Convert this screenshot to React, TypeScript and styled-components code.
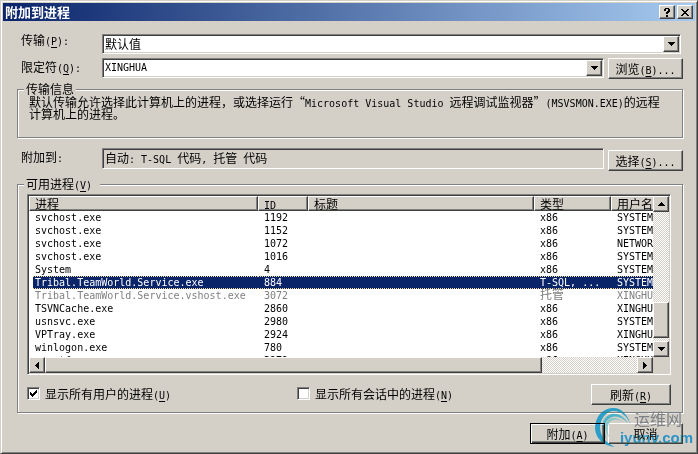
import React, { useState } from "react";
import styled, { createGlobalStyle, css } from "styled-components";

const face = "#d4d0c8";
const navy = "#0a246a";
const shadow = "#808080";
const dark = "#404040";

const GlobalStyle = createGlobalStyle`
  *, *::before, *::after { box-sizing: border-box; }
  body {
    margin: 0;
    background: ${face};
    color: #000;
    font-family: "Noto Sans CJK SC", sans-serif;
    font-size: 12px;
    line-height: 12px;
    text-spacing-trim: space-all;
  }
  button, input, select { font: inherit; color: inherit; border-radius: 0; margin: 0; }
`;

const raised = css`
  background: ${face};
  border: 1px solid;
  border-color: #fff ${dark} ${dark} #fff;
  box-shadow: inset -1px -1px 0 ${shadow};
`;

const sunken = css`
  border: 1px solid;
  border-color: ${shadow} #fff #fff ${shadow};
  box-shadow: inset 1px 1px 0 ${dark}, inset -1px -1px 0 ${face};
`;

const Latin = styled.span`
  font-family: "DejaVu Sans Mono", monospace;
  font-size: 10px;
  line-height: 0;
  white-space: pre-wrap;
`;

const Key = styled.u`
  text-underline-offset: 2px;
`;

function Mixed({ children }: { children: string }) {
  return (
    <>
      {children.split(/([\x20-\x7e]+)/).map((part, i) => (i % 2 ? <Latin key={i}>{part}</Latin> : part))}
    </>
  );
}

function Caption({ text, hot, tail = "" }: { text: string; hot: string; tail?: string }) {
  return (
    <>
      {text}
      <Latin>
        (<Key>{hot}</Key>){tail}
      </Latin>
    </>
  );
}

const Dialog = styled.main`
  position: relative;
  padding: 2px;
  background: ${face};
  border: 1px solid;
  border-color: ${face} ${dark} ${dark} ${face};
  box-shadow: inset 1px 1px 0 #fff, inset -1px -1px 0 ${shadow};
`;

const TitleBar = styled.header`
  display: flex;
  align-items: center;
  gap: 2px;
  height: 18px;
  padding: 0 2px;
  background: linear-gradient(90deg, ${navy}, #a6caf0);
`;

const Title = styled.h1`
  flex: 1;
  margin: 0;
  color: #fff;
  font-size: 13px;
  line-height: 16px;
  font-weight: 700;
`;

const CaptionButton = styled.button`
  ${raised}
  display: grid;
  place-items: center;
  width: 16px;
  height: 14px;
  padding: 0;
`;

const Body = styled.form`
  padding: 13px 12px 7px 14px;
`;

const FormRow = styled.div<{ $top?: number; $end?: number; $min?: number }>`
  display: flex;
  align-items: flex-start;
  gap: 4px;
  min-height: ${(p) => p.$min ?? 20}px;
  margin-top: ${(p) => p.$top ?? 0}px;
  padding-left: 4px;
  padding-right: ${(p) => p.$end ?? 0}px;
`;

const FieldLabel = styled.label<{ $pad?: number }>`
  flex: 0 0 77px;
  padding-top: ${(p) => p.$pad ?? 0}px;
`;

const Combo = styled.div`
  ${sunken}
  flex: 1;
  min-width: 0;
  display: grid;
  grid-template-columns: minmax(0, 1fr) 16px;
  height: 20px;
  padding: 1px;
  background: #fff;
`;

const Select = styled.select`
  grid-area: 1 / 1 / 2 / 3;
  appearance: none;
  border: 0;
  outline: 0;
  background: transparent;
  padding: 0 18px 0 1px;
  line-height: 16px;
`;

const TextInput = styled.input`
  min-width: 0;
  border: 0;
  outline: 0;
  background: transparent;
  padding: 0 1px;
  font-family: "DejaVu Sans Mono", monospace;
  font-size: 10px;
`;

const ArrowFace = styled.span`
  ${raised}
  grid-area: 1 / 2;
  display: grid;
  place-items: center;
  pointer-events: none;
`;

const ArrowButton = styled.button`
  ${raised}
  display: grid;
  place-items: center;
  width: 16px;
  height: 16px;
  padding: 0;
  flex: none;
`;

const PushButton = styled.button<{ $wide?: boolean; $default?: boolean; $low?: boolean }>`
  ${raised}
  flex: none;
  width: ${(p) => (p.$wide ? 80 : 75)}px;
  height: 21px;
  padding: 0;
  white-space: nowrap;
  align-self: ${(p) => (p.$low ? "flex-end" : "auto")};
  ${(p) =>
    p.$default &&
    css`
      border-color: #000;
      box-shadow: inset 1px 1px 0 #fff, inset -1px -1px 0 ${dark}, inset -2px -2px 0 ${shadow};
    `}
`;

const Group = styled.fieldset<{ $top: number }>`
  min-width: 0;
  margin: ${(p) => p.$top}px 0 0;
  padding: 0;
  border: 1px solid ${shadow};
  box-shadow: inset 1px 1px 0 #fff, 1px 1px 0 #fff;
`;

const Legend = styled.legend<{ $end?: number }>`
  margin-left: 6px;
  padding: 0 ${(p) => p.$end ?? 2}px 0 2px;
  background: ${face};
`;

const Description = styled.p`
  min-height: 42px;
  margin: 0;
  padding: 1px 16px 0 11px;
`;

const ReadOnly = styled.output`
  flex: 1;
  min-width: 0;
  height: 21px;
  padding: 3px 2px;
  border: 1px solid;
  border-color: ${shadow} #fff #fff ${shadow};
  box-shadow: inset 1px 1px 0 ${dark};
`;

const GroupBody = styled.div`
  padding: 4px 11px 7px 9px;
`;

const ListFrame = styled.div`
  ${sunken}
  display: grid;
  grid-template-columns: minmax(0, 1fr) 16px;
  grid-template-rows: 161px 16px;
  padding: 1px;
  background: #fff;
`;

const Viewport = styled.div`
  overflow: hidden;
`;

const Table = styled.table`
  width: 100%;
  table-layout: fixed;
  border-collapse: separate;
  border-spacing: 0;
`;

const Col = styled.col<{ $width?: number }>`
  width: ${(p) => (p.$width ? `${p.$width}px` : "auto")};
`;

const HeadCell = styled.th`
  ${raised}
  height: 15px;
  padding: 0 0 0 5px;
  font-weight: 400;
  line-height: 13px;
  text-align: left;
  white-space: nowrap;
  overflow: hidden;

  &:last-child { border-right: 0; box-shadow: inset 0 -1px 0 ${shadow}; }
`;

const dots = "repeating-linear-gradient(90deg, #f5db95 0 1px, #0a246a 1px 2px)";

const CellText = styled.span`
  display: block;
  height: 13px;
  line-height: 10px;
  padding-left: 6px;
  white-space: nowrap;
`;

const Row = styled.tr<{ $state?: "selected" | "disabled" }>`
  color: ${(p) => (p.$state === "selected" ? "#fff" : p.$state === "disabled" ? shadow : "#000")};

  td { padding: 0; }
  td:first-child { padding-left: 4px; }
  td:first-child ${CellText} { padding-left: 2px; }

  ${CellText} {
    ${(p) =>
      p.$state === "selected" &&
      css`
        background: ${dots} top / 100% 1px no-repeat, ${dots} bottom / 100% 1px no-repeat, ${navy};
      `}
  }
`;

const Track = styled.div<{ $vertical?: boolean }>`
  display: flex;
  flex-direction: ${(p) => (p.$vertical ? "column" : "row")};
  background: repeating-conic-gradient(#fff 0 25%, ${face} 0 50%) 0 0 / 2px 2px;
`;

const Lane = styled.div`
  flex: 1;
  display: flex;
`;

const VerticalLane = styled(Lane)`
  flex-direction: column;
  justify-content: flex-end;
  padding-bottom: 3px;
`;

const Thumb = styled.div<{ $vertical?: boolean }>`
  ${raised}
  ${(p) => (p.$vertical ? "height: 36px;" : "width: 84%;")}
`;

const Corner = styled.div`
  background: ${face};
`;

const Options = styled.div`
  display: grid;
  grid-template-columns: minmax(0, 270px) minmax(0, 1fr) auto;
  align-items: start;
  margin-top: 9px;
`;

const CheckLabel = styled.label`
  display: flex;
  align-items: center;
  gap: 5px;
  padding-top: 3px;
  white-space: nowrap;
`;

const CheckBox = styled.span`
  ${sunken}
  display: grid;
  place-items: center;
  width: 13px;
  height: 13px;
  background: #fff;

  input { grid-area: 1 / 1; appearance: none; width: 100%; height: 100%; outline: 0; }
  svg { grid-area: 1 / 1; pointer-events: none; }
`;

const Actions = styled.footer`
  display: flex;
  justify-content: flex-end;
  gap: 3px;
  margin-top: 10px;
`;

const Watermark = styled.div`
  position: absolute;
  right: 3px;
  bottom: 5px;
  width: 101px;
  height: 42px;
  pointer-events: none;
  mix-blend-mode: darken;
`;

const Swirl = styled.svg`
  position: absolute;
  left: 0;
  top: 0;
`;

const MarkName = styled.span`
  position: absolute;
  left: 41px;
  top: 4px;
  color: #7d8085;
  font-size: 16px;
  line-height: 16px;
  white-space: nowrap;
`;

const MarkSite = styled.span`
  position: absolute;
  right: 1px;
  top: 23px;
  color: #2b93dc;
  font: 700 15px/18px "Liberation Sans", sans-serif;
  white-space: nowrap;
`;

const arrows = {
  down: "M0 0h7v1h-1v1h-1v1h-1v1h-1v-1h-1v-1h-1v-1h-1z",
  up: "M3 0h1v1h1v1h1v1h1v1h-7v-1h1v-1h1v-1h1z",
  left: "M3 0h1v7h-1v-1h-1v-1h-1v-1h-1v-1h1v-1h1v-1h1z",
  right: "M0 0h1v1h1v1h1v1h1v1h-1v1h-1v1h-1v1h-1z",
};

function Arrow({ to }: { to: keyof typeof arrows }) {
  const flat = to === "down" || to === "up";
  return (
    <svg width={flat ? 7 : 4} height={flat ? 4 : 7} shapeRendering="crispEdges" aria-hidden="true">
      <path d={arrows[to]} />
    </svg>
  );
}

type Process = { name: string; id: string; kind: string; user: string; state?: "selected" | "disabled" };

const processes: Process[] = [
  { name: "svchost.exe", id: "1192", kind: "x86", user: "SYSTEM" },
  { name: "svchost.exe", id: "1152", kind: "x86", user: "SYSTEM" },
  { name: "svchost.exe", id: "1072", kind: "x86", user: "NETWORK" },
  { name: "svchost.exe", id: "1016", kind: "x86", user: "SYSTEM" },
  { name: "System", id: "4", kind: "x86", user: "SYSTEM" },
  { name: "Tribal.TeamWorld.Service.exe", id: "884", kind: "T-SQL, ...", user: "SYSTEM", state: "selected" },
  { name: "Tribal.TeamWorld.Service.vshost.exe", id: "3072", kind: "托管", user: "XINGHUA", state: "disabled" },
  { name: "TSVNCache.exe", id: "2860", kind: "x86", user: "XINGHUA" },
  { name: "usnsvc.exe", id: "2980", kind: "x86", user: "SYSTEM" },
  { name: "VPTray.exe", id: "2924", kind: "x86", user: "XINGHUA" },
  { name: "winlogon.exe", id: "780", kind: "x86", user: "SYSTEM" },
  { name: "wscntfy.exe", id: "3272", kind: "x86", user: "XINGHUA" },
];

function Check({ text, hot, initial }: { text: string; hot: string; initial: boolean }) {
  const [on, setOn] = useState(initial);
  return (
    <CheckLabel>
      <CheckBox>
        <input type="checkbox" checked={on} onChange={(e) => setOn(e.target.checked)} />
        {on && (
          <svg width="7" height="7" shapeRendering="crispEdges" aria-hidden="true">
            <path d="M0 2h1v1h1v1h1v-1h1v-1h1v-1h1v-1h1v3h-1v1h-1v1h-1v1h-1v1h-1v-1h-1v-1h-1z" />
          </svg>
        )}
      </CheckBox>
      <span>
        <Caption text={text} hot={hot} />
      </span>
    </CheckLabel>
  );
}

export default function App() {
  return (
    <>
      <GlobalStyle />
      <Dialog lang="zh-CN">
        <TitleBar>
          <Title>附加到进程</Title>
          <CaptionButton type="button" aria-label="帮助">
            <svg width="6" height="9" shapeRendering="crispEdges" aria-hidden="true">
              <path d="M1 0h4v1h1v3h-1v1h-1v1h-2v-2h1v-1h1v-2h-2v2h-2v-2h1zM2 7h2v2h-2z" />
            </svg>
          </CaptionButton>
          <CaptionButton type="button" aria-label="关闭">
            <svg width="8" height="7" shapeRendering="crispEdges" aria-hidden="true">
              <path d="M0 0h2v1h1v1h2v-1h1v-1h2v1h-1v1h-1v1h-1v1h1v1h1v1h1v1h-2v-1h-1v-1h-2v1h-1v1h-2v-1h1v-1h1v-1h1v-1h-1v-1h-1v-1h-1z" />
            </svg>
          </CaptionButton>
        </TitleBar>

        <Body onSubmit={(e) => e.preventDefault()}>
          <FormRow $end={2}>
            <FieldLabel htmlFor="transport">
              <Caption text="传输" hot="P" tail=":" />
            </FieldLabel>
            <Combo>
              <Select id="transport" defaultValue="默认值">
                <option>默认值</option>
              </Select>
              <ArrowFace>
                <Arrow to="down" />
              </ArrowFace>
            </Combo>
          </FormRow>

          <FormRow $top={4}>
            <FieldLabel htmlFor="qualifier" $pad={3}>
              <Caption text="限定符" hot="Q" tail=":" />
            </FieldLabel>
            <Combo>
              <TextInput id="qualifier" defaultValue="XINGHUA" />
              <ArrowButton type="button" aria-label="打开列表">
                <Arrow to="down" />
              </ArrowButton>
            </Combo>
            <PushButton type="button">
              <Caption text="浏览" hot="B" tail="..." />
            </PushButton>
          </FormRow>

          <Group $top={4}>
            <Legend>传输信息</Legend>
            <Description>
              <Mixed>
                默认传输允许选择此计算机上的进程，或选择运行“Microsoft Visual Studio 远程调试监视器”(MSVSMON.EXE)的远程计算机上的进程。
              </Mixed>
            </Description>
          </Group>

          <FormRow $top={10} $min={23}>
            <FieldLabel htmlFor="attach" $pad={3}>
              <Mixed>附加到:</Mixed>
            </FieldLabel>
            <ReadOnly id="attach">
              <Mixed>自动: T-SQL 代码, 托管 代码</Mixed>
            </ReadOnly>
            <PushButton type="button" $low>
              <Caption text="选择" hot="S" tail="..." />
            </PushButton>
          </FormRow>

          <Group $top={7}>
            <Legend $end={8}>
              <Caption text="可用进程" hot="V" />
            </Legend>
            <GroupBody>
              <ListFrame>
                <Viewport>
                  <Table>
                    <colgroup>
                      <Col $width={229} />
                      <Col $width={50} />
                      <Col />
                      <Col $width={77} />
                      <Col $width={42} />
                    </colgroup>
                    <thead>
                      <tr>
                        {["进程", "ID", "标题", "类型", "用户名"].map((h) => (
                          <HeadCell key={h} scope="col">
                            <Mixed>{h}</Mixed>
                          </HeadCell>
                        ))}
                      </tr>
                    </thead>
                    <tbody>
                      {processes.map((p) => (
                        <Row key={p.name + p.id} $state={p.state}>
                          {[p.name, p.id, "", p.kind, p.user].map((value, i) => (
                            <td key={i}>
                              <CellText>
                                <Mixed>{value}</Mixed>
                              </CellText>
                            </td>
                          ))}
                        </Row>
                      ))}
                    </tbody>
                  </Table>
                </Viewport>
                <Track $vertical>
                  <ArrowButton type="button" aria-label="向上滚动">
                    <Arrow to="up" />
                  </ArrowButton>
                  <VerticalLane>
                    <Thumb $vertical />
                  </VerticalLane>
                  <ArrowButton type="button" aria-label="向下滚动">
                    <Arrow to="down" />
                  </ArrowButton>
                </Track>
                <Track>
                  <ArrowButton type="button" aria-label="向左滚动">
                    <Arrow to="left" />
                  </ArrowButton>
                  <Lane>
                    <Thumb />
                  </Lane>
                  <ArrowButton type="button" aria-label="向右滚动">
                    <Arrow to="right" />
                  </ArrowButton>
                </Track>
                <Corner />
              </ListFrame>

              <Options>
                <Check text="显示所有用户的进程" hot="U" initial />
                <Check text="显示所有会话中的进程" hot="N" initial={false} />
                <PushButton type="button" $wide>
                  <Caption text="刷新" hot="R" />
                </PushButton>
              </Options>
            </GroupBody>
          </Group>

          <Actions>
            <PushButton type="submit" $default>
              <Caption text="附加" hot="A" />
            </PushButton>
            <PushButton type="button">取消</PushButton>
          </Actions>
        </Body>

        <Watermark>
          <Swirl width="42" height="42" viewBox="0 0 42 42" aria-hidden="true">
            <path d="M38 19C34 7 27 1 19 2C8 3 2 12 2 23C3 33 11 40 22 41C13 37 7 30 7 21C8 11 14 5 21 5C28 5 34 10 38 19Z" fill="#2b9fe0" />
            <path d="M35 17C30 9 22 6 16 9C8 13 7 24 14 34C10 24 11 15 17 12C23 9 29 11 35 17Z" fill="#4db4e8" />
            <path d="M30 16C24 12 19 13 16 17C14 21 14 26 16 31C11 25 11 18 15 14C19 11 25 11 30 16Z" fill="#86c8e8" />
          </Swirl>
          <MarkName>运维网</MarkName>
          <MarkSite>iyunv.com</MarkSite>
        </Watermark>
      </Dialog>
    </>
  );
}
